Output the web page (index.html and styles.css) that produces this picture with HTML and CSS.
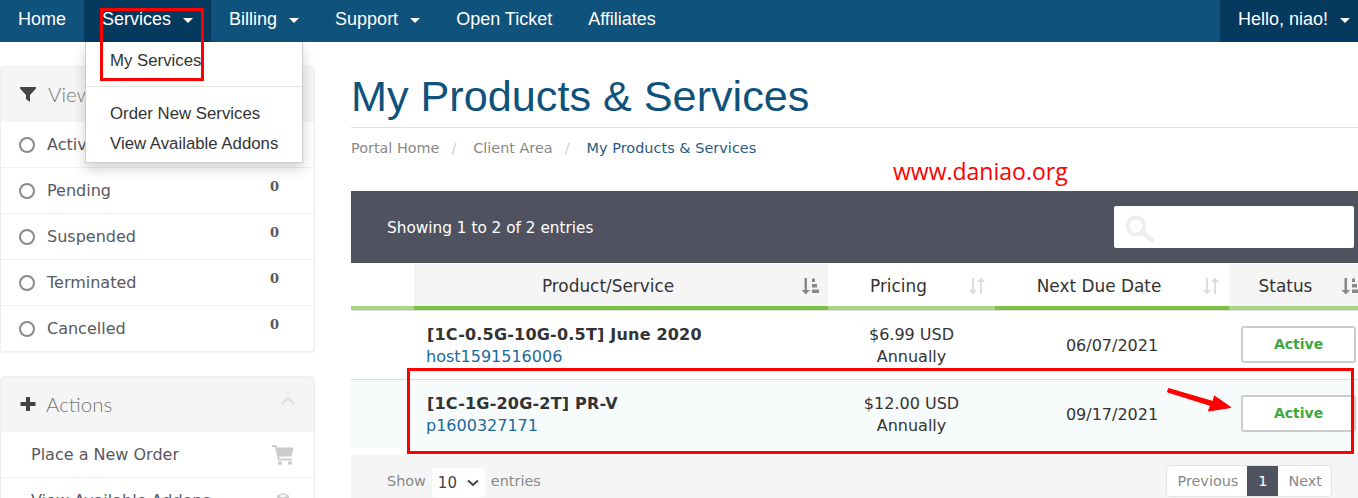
FILE: index.html
```html
<!DOCTYPE html>
<html lang="en">
<head>
<meta charset="utf-8">
<title>My Products &amp; Services</title>
<link rel="stylesheet" href="styles.css">
</head>
<body>
<header class="topbar">
  <nav class="nav">
    <a class="nav-link">Home</a>
    <div class="nav-drop">
      <a class="nav-link active">Services <i class="caret"></i></a>
      <div class="dropdown">
        <a class="drop-item first">My Services</a>
        <div class="drop-div"></div>
        <a class="drop-item">Order New Services</a>
        <a class="drop-item">View Available Addons</a>
      </div>
    </div>
    <a class="nav-link">Billing <i class="caret"></i></a>
    <a class="nav-link">Support <i class="caret"></i></a>
    <a class="nav-link">Open Ticket</a>
    <a class="nav-link">Affiliates</a>
  </nav>
  <a class="nav-link active hello">Hello, niao! <i class="caret"></i></a>
</header>
<main class="layout">
  <aside class="sidebar">
    <section class="panel">
      <div class="panel-head">
        <svg class="head-icon" viewBox="0 0 16 16"><path d="M0 1h16v1.500L10 9v7l-4-3V9L0 2.500z"/></svg>
        <span>View</span>
      </div>
      <div class="row"><i class="radio"></i><span class="row-label">Active</span><b class="count">2</b></div>
      <div class="row"><i class="radio"></i><span class="row-label">Pending</span><b class="count">0</b></div>
      <div class="row"><i class="radio"></i><span class="row-label">Suspended</span><b class="count">0</b></div>
      <div class="row"><i class="radio"></i><span class="row-label">Terminated</span><b class="count">0</b></div>
      <div class="row last"><i class="radio"></i><span class="row-label">Cancelled</span><b class="count">0</b></div>
    </section>
    <section class="panel">
      <div class="panel-head">
        <svg class="head-icon" viewBox="0 0 16 16"><path d="M6 1h4v5h5.500v4H10v5H6v-5H.5V6H6z"/></svg>
        <span class="tight">Actions</span>
        <svg class="chev" viewBox="0 0 16 10"><path d="M1.500 8.500L8 2l6.500 6.500" fill="none" stroke="#e4e4e4" stroke-width="3"/></svg>
      </div>
      <div class="row action"><span>Place a New Order</span>
        <svg class="side-icon" viewBox="0 0 22 20"><path d="M0 0h4l1 2.500h16.500l-2 9H7l.5 2h12.500v2H6L3 2H0z"/><circle cx="8" cy="18" r="2"/><circle cx="18" cy="18" r="2"/></svg>
      </div>
      <div class="row action"><span>View Available Addons</span>
        <svg class="side-icon small" viewBox="0 0 14 16"><path d="M7 0l6 2.500v10L7 16l-6-3.500v-10zM3 3l4 1.600L11 3 7 1.500z"/></svg>
      </div>
    </section>
  </aside>
  <section class="content">
    <h1 class="title">My Products &amp; Services</h1>
    <ol class="crumbs">
      <li>Portal Home</li><li class="sep">/</li><li>Client Area</li><li class="sep">/</li><li class="current">My Products &amp; Services</li>
    </ol>
    <div class="watermark">www.daniao.org</div>
    <div class="table-top">
      <span>Showing 1 to 2 of 2 entries</span>
      <div class="search">
        <svg class="search-icon" viewBox="0 0 30 28"><circle cx="11" cy="11" r="8.500" fill="none" stroke="#eee" stroke-width="4"/><path d="M17 17l10 8" stroke="#eee" stroke-width="5" stroke-linecap="round"/></svg>
      </div>
    </div>
    <table class="table">
      <colgroup><col class="c0"><col class="c1"><col class="c2"><col class="c3"><col class="c4"></colgroup>
      <thead>
        <tr>
          <th></th>
          <th class="sorted on"><span>Product/Service</span><svg class="sort" viewBox="0 0 18 18"><path d="M3.500 1h2.500v12h3l-4.250 4.500L.5 13h3z"/><path d="M11 1.500h3V5h-3zM11 7h5v3.500h-5zM11 12.500h7V16h-7z"/></svg></th>
          <th><span>Pricing</span><svg class="sort dim" viewBox="0 0 18 18"><path d="M4 1h2v12h3l-4 4.500L1 13h3zM12 17h2V5h3l-4-4.500L9 5h3z"/></svg></th>
          <th class="on"><span>Next Due Date</span><svg class="sort dim" viewBox="0 0 18 18"><path d="M4 1h2v12h3l-4 4.500L1 13h3zM12 17h2V5h3l-4-4.500L9 5h3z"/></svg></th>
          <th class="sorted last-col"><span>Status</span><svg class="sort edge" viewBox="0 0 18 18"><path d="M3.500 1h2.500v12h3l-4.250 4.500L.5 13h3z"/><path d="M11 1.500h3V5h-3zM11 7h5v3.500h-5zM11 12.500h7V16h-7z"/></svg></th>
        </tr>
      </thead>
      <tbody>
        <tr>
          <td></td>
          <td class="prod"><strong>[1C-0.5G-10G-0.5T] June 2020</strong><a>host1591516006</a></td>
          <td class="mid">$6.99 USD<br>Annually</td>
          <td class="mid">06/07/2021</td>
          <td class="stat"><span class="badge">Active</span></td>
        </tr>
        <tr class="alt">
          <td></td>
          <td class="prod"><strong>[1C-1G-20G-2T] PR-V</strong><a>p1600327171</a></td>
          <td class="mid">$12.00 USD<br>Annually</td>
          <td class="mid">09/17/2021</td>
          <td class="stat"><span class="badge">Active</span></td>
        </tr>
      </tbody>
    </table>
    <div class="table-foot">
      <div class="length">Show <span class="select">10 <svg class="sel-chev" viewBox="0 0 12 8"><path d="M1 1.500l5 4.500 5-4.500" fill="none" stroke="#444" stroke-width="2"/></svg></span> entries</div>
      <div class="pager"><span class="pg">Previous</span><span class="pg cur">1</span><span class="pg">Next</span></div>
    </div>
  </section>
</main>
<div class="mark mark-nav"></div>
<div class="mark mark-row"></div>
<svg class="mark-arrow" viewBox="0 0 70 26"><path d="M1.500 1.500L46 14.500l1.500-5.500L64 20.500 41.500 24l2-5.500L.5 5z" fill="#f00" stroke="#f00" stroke-linejoin="round"/></svg>
</body>
</html>
```
FILE: styles.css
```css
* { box-sizing: border-box; }
html, body { margin: 0; height: 498px; overflow: hidden; }
body { position: relative; background: #fff; font-family: "DejaVu Sans", Verdana, sans-serif; font-size: 16px; color: #333; }
a { text-decoration: none; }

.topbar { display: flex; justify-content: space-between; height: 42px; background: #0f527b; font-family: "Liberation Sans", Arial, sans-serif; font-size: 18px; }
.nav { display: flex; }
.nav-drop { position: relative; }
.nav-link { display: flex; align-items: center; gap: 12px; height: 42px; padding: 0 18px 3px; color: #fff; white-space: nowrap; }
.nav-link.active { background: #053a5e; }
.hello { width: 138px; padding-right: 5px; }
.caret { display: block; width: 0; height: 0; margin-top: 1px; border: 5px solid transparent; border-top-color: #fff; border-bottom: 0; }
.dropdown { position: absolute; z-index: 5; top: 42px; left: 1px; width: 218px; height: 121px; padding-top: 5px; background: #fff; border: 1px solid #ccc; border-top: 0; box-shadow: 0 6px 12px rgba(0,0,0,.175); font-size: 16.800px; }
.drop-item { display: block; height: 30px; padding: 0 24px; line-height: 30px; color: #333; white-space: nowrap; }
.drop-item.first { height: 27px; line-height: 27px; }
.drop-div { height: 1px; margin: 12px 0; background: #e5e5e5; }

.layout { display: flex; align-items: flex-start; gap: 36px; padding-top: 24px; }
.sidebar { flex: 0 0 315px; display: flex; flex-direction: column; gap: 24px; }
.panel { background: #fff; border: 1px solid #eee; border-radius: 4px; box-shadow: 0 1px 1px rgba(0,0,0,.05); }
.panel-head { display: flex; align-items: center; height: 55px; padding: 0 0 2px 19px; background: #f5f5f5; color: #777; font-family: "Lato", "Open Sans", sans-serif; font-size: 20.500px; font-weight: 300; }
.panel-head span { margin-left: 12px; }
.panel-head .tight { margin-left: 10px; }
.head-icon { flex: none; width: 16px; height: 16px; fill: #444; }
.chev { width: 16px; height: 10px; margin: -6px 18px 0 auto; }
.row { display: flex; align-items: center; height: 46px; padding-left: 18px; border-bottom: 1px solid #f0f0f0; color: #58595f; font-size: 16px; }
.row.last { height: 45px; border-bottom: 0; }
.radio { flex: none; width: 16px; height: 16px; border: 2px solid #8a8a8a; border-radius: 50%; }
.row-label { margin-left: 12px; }
.count { margin: -8px 35px 0 auto; font-family: "DejaVu Serif", serif; font-size: 13px; color: #5a5a5a; }
.action { justify-content: space-between; padding: 0 20px 0 30px; }
.side-icon { width: 22px; height: 20px; fill: #ccc; }
.side-icon.small { width: 14px; height: 16px; margin-right: 4px; }

.content { flex: 0 0 1007px; }
.title { height: 57px; margin: 5px 0 0; border-bottom: 1px solid #ddd; color: #0f527b; font-family: "Liberation Sans", Arial, sans-serif; font-size: 43.200px; font-weight: 400; line-height: 50px; }
.crumbs { display: flex; margin: 0; padding: 12px 0 0; list-style: none; color: #888; font-size: 14.400px; line-height: 17px; }
.sep { margin: 0 17px 0 12px; color: #ccc; }
.current { color: #2a5a7f; letter-spacing: .05px; }
.watermark { position: relative; left: 542px; top: -2px; height: 0; color: #f00; font-family: "Open Sans", sans-serif; font-size: 23px; line-height: 32px; }
.table-top { display: flex; align-items: center; justify-content: space-between; height: 72px; margin-top: 34px; padding: 0 4px 0 36px; background: #50535f; color: #fff; font-size: 15.300px; }
.table-top > span { margin-top: 2px; }
.search { width: 240px; height: 42px; padding: 9px 0 0 11px; background: #fff; border-radius: 2px; }
.search-icon { display: block; width: 30px; height: 28px; }

.table { width: 1007px; margin-top: 1px; border-collapse: separate; border-spacing: 0; table-layout: fixed; }
.c0 { width: 63px; }
.c1 { width: 414px; }
.c2 { width: 167px; }
.c3 { width: 234px; }
.c4 { width: 129px; }
.table th { position: relative; height: 46px; padding: 1px 26px 0 0; border-bottom: 4px solid #aad585; box-shadow: 0 1px 0 #ddd; color: #333; font-size: 16.900px; font-weight: 400; text-align: center; }
.table th.on { border-bottom-color: #7cc144; }
.table th.sorted { background: #f5f5f5; }
.table th.last-col { padding-right: 16px; }
.sort { position: absolute; right: 9px; top: 13px; width: 18px; height: 18px; fill: #888; }
.sort.dim { fill: #ddd; }
.sort.edge { right: -1px; }
.table td { height: 68px; padding: 0; border-bottom: 1px solid #ddd; font-size: 16px; line-height: 22px; vertical-align: middle; }
.table tbody tr:first-child td { height: 70px; }
.table tbody tr:last-child td { border-bottom: 0; }
.table td.prod { padding: 2px 0 0 12px; }
.table td.mid { padding-top: 2px; color: #333; text-align: center; }
.table td.stat { padding: 0 0 1px 12px; }
.table .alt td.prod, .table .alt td.mid { padding-top: 1px; }
.table .alt td.stat { padding-bottom: 2px; }
.alt td { background: #f8fbfc; }
.prod strong { display: block; margin-left: 1px; color: #333; font-size: 16px; font-weight: 700; letter-spacing: .2px; }
.prod a { display: block; color: #1a6a9c; }
.badge { display: block; width: 115px; height: 37px; border: 2px solid #ccc; border-radius: 3px; background: #fff; color: #3ea83f; font-size: 14px; font-weight: 700; line-height: 33px; text-align: center; }

.table-foot { display: flex; justify-content: space-between; height: 60px; margin-top: 7px; padding: 10px 26px 0 36px; background: #f5f5f5; color: #888; font-size: 14.400px; }
.length { display: flex; align-items: center; gap: 6px; height: 32px; }
.select { display: flex; align-items: center; gap: 10px; width: 53px; height: 29px; margin-top: 3px; padding-left: 6px; background: #fff; border-radius: 4px; color: #444; font-size: 15px; }
.sel-chev { width: 12px; height: 8px; }
.pager { display: flex; height: 32px; border: 1px solid #e3e3e3; border-radius: 4px; background: #fff; line-height: 30px; }
.pg { padding: 0 9px 0 10px; }
.pg.cur { padding: 0 11px; background: #50535f; color: #fff; }

.mark { position: absolute; z-index: 10; border: 3px solid #f00; }
.mark-nav { left: 100px; top: 8px; width: 104px; height: 73px; }
.mark-row { left: 407px; top: 368px; width: 947px; height: 86px; }
.mark-arrow { position: absolute; z-index: 11; left: 1167px; top: 387px; width: 70px; height: 26px; }
```
